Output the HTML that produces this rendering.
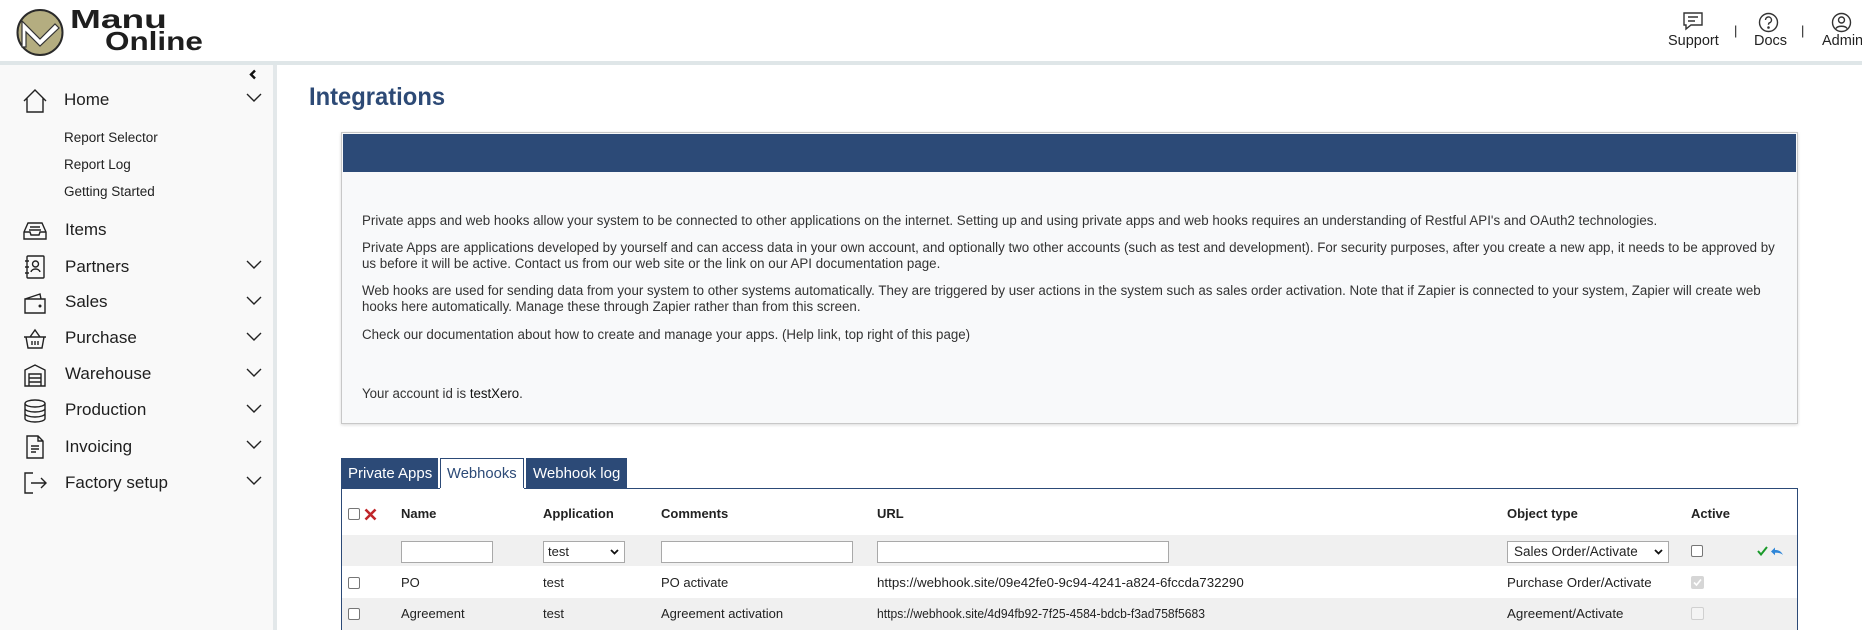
<!DOCTYPE html>
<html><head><meta charset="utf-8">
<style>
*{margin:0;padding:0;box-sizing:border-box}
body{width:1862px;height:630px;overflow:hidden;background:#fff;font-family:"Liberation Sans",Arial,sans-serif;color:#222;position:relative}
.a{position:absolute;white-space:nowrap}
.fit{position:absolute;white-space:nowrap;transform-origin:0 50%}
.side{position:absolute;left:0;top:65px;width:273px;height:565px;background:#f9f9f9}
.nav{font-size:17px;color:#1e1e1e;line-height:20px}
.sub{font-size:13.5px;color:#222;line-height:16px}
.chev{position:absolute;left:246px;width:16px;height:9px}
.ic{position:absolute;left:22px;width:26px;height:26px}
.p{font-size:13.5px;color:#333;line-height:16px}
.th{font-size:13px;font-weight:bold;color:#222;line-height:16px}
.td{font-size:13px;color:#222;line-height:16px}
.inp{position:absolute;background:#fff;border:1px solid #a9a9a9;height:22px;top:541px}
.cb{position:absolute;width:12px;height:12px;border:1px solid #767676;border-radius:2px;background:#fff}
</style></head><body>
<div class="a" style="left:0;top:0;width:1862px;height:62px;background:#fff"></div>
<div class="a" style="left:0;top:61px;width:1862px;height:4px;background:#dfe6e8"></div>
<svg class="a" style="left:15px;top:8px" width="50" height="50" viewBox="0 0 50 50">
<circle cx="25" cy="24.5" r="22.5" fill="#b4ad80" stroke="#2a2a2a" stroke-width="2"/>
<path d="M7 39 L7 13 L25 31 L40 16 L44 20 L25 38 L11 24 L11 39 Z" fill="#fff" stroke="#333" stroke-width="1.2"/>
</svg>
<div class="fit" style="left:70px;top:5px;font-size:26px;font-weight:bold;color:#1e1e1e;line-height:28px" id="lg1">Manu</div>
<div class="fit" style="left:105px;top:27px;font-size:26px;font-weight:bold;color:#1e1e1e;line-height:28px" id="lg2">Online</div>

<svg class="a" style="left:1682px;top:11px" width="22" height="20" viewBox="0 0 22 20" fill="none" stroke="#333" stroke-width="1.4"><path d="M2 2h18v12H9l-5 4v-4H2z"/><path d="M6 6h10M6 10h7"/></svg>
<div class="a" style="left:1668px;top:33px;font-size:14.5px">Support</div>
<div class="a" style="left:1734px;top:23px;font-size:13px">|</div>
<svg class="a" style="left:1758px;top:12px" width="21" height="21" viewBox="0 0 21 21" fill="none" stroke="#333" stroke-width="1.4"><circle cx="10.5" cy="10.5" r="9"/><path d="M7.5 8a3 3 0 1 1 4 2.8c-.8.4-1 1-1 2"/><circle cx="10.5" cy="15.5" r=".6" fill="#333"/></svg>
<div class="a" style="left:1754px;top:33px;font-size:14.5px">Docs</div>
<div class="a" style="left:1801px;top:23px;font-size:13px">|</div>
<svg class="a" style="left:1831px;top:12px" width="21" height="21" viewBox="0 0 21 21" fill="none" stroke="#333" stroke-width="1.4"><circle cx="10.5" cy="10.5" r="9"/><circle cx="10.5" cy="8" r="3"/><path d="M5 16.5c1.5-3 9.5-3 11 0"/></svg>
<div class="a" style="left:1822px;top:33px;font-size:14.5px">Admin</div>

<div class="side"></div>
<div class="a" style="left:273px;top:65px;width:4px;height:565px;background:#e3e8ea"></div>
<svg class="a" style="left:249px;top:69px" width="8" height="11" viewBox="0 0 8 11"><path d="M6 1.5L2 5.5l4 4" fill="none" stroke="#111" stroke-width="2.4"/></svg>

<svg class="ic" style="top:88px" viewBox="0 0 26 26" fill="none" stroke="#222" stroke-width="1.4"><path d="M2 13L13 2l11 11M5 10v14h16V10"/></svg>
<div class="a nav" style="left:64px;top:90px">Home</div>
<div class="a sub" style="left:64px;top:130px">Report Selector</div>
<div class="a sub" style="left:64px;top:157px">Report Log</div>
<div class="a sub" style="left:64px;top:184px">Getting Started</div>

<svg class="ic" style="top:218px" viewBox="0 0 26 26" fill="none" stroke="#222" stroke-width="1.4"><path d="M2 14l4-9h14l4 9v7H2zM2 14h6l1 3h8l1-3h6M8 9h10M7 12h12"/></svg>
<div class="a nav" style="left:65px;top:220px">Items</div>
<svg class="ic" style="top:254px" viewBox="0 0 26 26" fill="none" stroke="#222" stroke-width="1.4"><rect x="5" y="2" width="17" height="22" rx="1"/><circle cx="13.5" cy="10" r="3"/><path d="M9 18c1-4 8-4 9 0M3 7h4M3 13h4M3 19h4"/></svg>
<div class="a nav" style="left:65px;top:257px">Partners</div>
<svg class="ic" style="top:290px" viewBox="0 0 26 26" fill="none" stroke="#222" stroke-width="1.4"><path d="M3 9h20v14H3zM3 9l15-5 1 5"/><circle cx="18" cy="16" r=".8" fill="#222"/></svg>
<div class="a nav" style="left:65px;top:292px">Sales</div>
<svg class="ic" style="top:326px" viewBox="0 0 26 26" fill="none" stroke="#222" stroke-width="1.4"><path d="M2 11h22M4 11l2 11h14l2-11M8 11l5-7 5 7M10 15v4M13 15v4M16 15v4"/></svg>
<div class="a nav" style="left:65px;top:328px">Purchase</div>
<svg class="ic" style="top:362px" viewBox="0 0 26 26" fill="none" stroke="#222" stroke-width="1.4"><path d="M3 24V8l10-5 10 5v16zM7 12h12v12H7zM7 16h12M7 20h12"/></svg>
<div class="a nav" style="left:65px;top:364px">Warehouse</div>
<svg class="ic" style="top:398px" viewBox="0 0 26 26" fill="none" stroke="#222" stroke-width="1.4"><ellipse cx="13" cy="5.5" rx="10" ry="3.5"/><path d="M3 5.5v15c0 2 4.5 3.5 10 3.5s10-1.5 10-3.5v-15M3 10.5c0 2 4.5 3.5 10 3.5s10-1.5 10-3.5M3 15.5c0 2 4.5 3.5 10 3.5s10-1.5 10-3.5"/></svg>
<div class="a nav" style="left:65px;top:400px">Production</div>
<svg class="ic" style="top:434px" viewBox="0 0 26 26" fill="none" stroke="#222" stroke-width="1.4"><path d="M5 2h11l5 5v17H5zM16 2v5h5M9 12h8M9 15h8M9 18h5"/></svg>
<div class="a nav" style="left:65px;top:437px">Invoicing</div>
<svg class="ic" style="top:470px" viewBox="0 0 26 26" fill="none" stroke="#222" stroke-width="1.4"><path d="M11 3H3v20h8M9 13h15M19 8l5 5-5 5"/></svg>
<div class="a nav" style="left:65px;top:473px">Factory setup</div>

<svg class="chev" style="top:93px" viewBox="0 0 16 9"><path d="M1 1l7 7 7-7" fill="none" stroke="#222" stroke-width="1.4"/></svg>
<svg class="chev" style="top:260px" viewBox="0 0 16 9"><path d="M1 1l7 7 7-7" fill="none" stroke="#222" stroke-width="1.4"/></svg>
<svg class="chev" style="top:296px" viewBox="0 0 16 9"><path d="M1 1l7 7 7-7" fill="none" stroke="#222" stroke-width="1.4"/></svg>
<svg class="chev" style="top:332px" viewBox="0 0 16 9"><path d="M1 1l7 7 7-7" fill="none" stroke="#222" stroke-width="1.4"/></svg>
<svg class="chev" style="top:368px" viewBox="0 0 16 9"><path d="M1 1l7 7 7-7" fill="none" stroke="#222" stroke-width="1.4"/></svg>
<svg class="chev" style="top:404px" viewBox="0 0 16 9"><path d="M1 1l7 7 7-7" fill="none" stroke="#222" stroke-width="1.4"/></svg>
<svg class="chev" style="top:440px" viewBox="0 0 16 9"><path d="M1 1l7 7 7-7" fill="none" stroke="#222" stroke-width="1.4"/></svg>
<svg class="chev" style="top:476px" viewBox="0 0 16 9"><path d="M1 1l7 7 7-7" fill="none" stroke="#222" stroke-width="1.4"/></svg>

<div class="fit" style="left:309px;top:83px;font-size:25px;font-weight:bold;color:#2d4a76;line-height:28px" id="t0">Integrations</div>

<div class="a" style="left:341px;top:132px;width:1457px;height:292px;background:#f8f9fa;border:1px solid #c8c8c8;box-shadow:0 1px 3px rgba(0,0,0,.15)"></div>
<div class="a" style="left:343px;top:134px;width:1453px;height:38px;background:#2c4a77"></div>

<div class="fit p" style="left:362px;top:213px" id="p1">Private apps and web hooks allow your system to be connected to other applications on the internet. Setting up and using private apps and web hooks requires an understanding of Restful API's and OAuth2 technologies.</div>
<div class="fit p" style="left:362px;top:240px" id="p2">Private Apps are applications developed by yourself and can access data in your own account, and optionally two other accounts (such as test and development). For security purposes, after you create a new app, it needs to be approved by</div>
<div class="fit p" style="left:362px;top:256px" id="p3">us before it will be active. Contact us from our web site or the link on our API documentation page.</div>
<div class="fit p" style="left:362px;top:283px" id="p4">Web hooks are used for sending data from your system to other systems automatically. They are triggered by user actions in the system such as sales order activation. Note that if Zapier is connected to your system, Zapier will create web</div>
<div class="fit p" style="left:362px;top:299px" id="p5">hooks here automatically. Manage these through Zapier rather than from this screen.</div>
<div class="fit p" style="left:362px;top:327px" id="p6">Check our documentation about how to create and manage your apps. (Help link, top right of this page)</div>
<div class="fit p" style="left:362px;top:386px" id="p7">Your account id is <span style="color:#111">testXero</span>.</div>

<div class="a" style="left:341px;top:458px;width:97px;height:31px;background:#2c4a77"></div>
<div class="a" style="left:440px;top:458px;width:84px;height:31px;background:#fff;border:1px solid #2c4a77;border-bottom:none"></div>
<div class="a" style="left:526px;top:458px;width:101px;height:31px;background:#2c4a77"></div>
<div class="fit" style="left:348px;top:465px;font-size:15px;color:#fff;line-height:17px" id="tb1">Private Apps</div>
<div class="fit" style="left:447px;top:465px;font-size:15px;color:#2c4a77;line-height:17px" id="tb2">Webhooks</div>
<div class="fit" style="left:533px;top:465px;font-size:15px;color:#fff;line-height:17px" id="tb3">Webhook log</div>

<div class="a" style="left:341px;top:488px;width:1457px;height:142px;border:1px solid #2c4a77;border-bottom:none;background:#fff"></div>
<div class="a" style="left:440px;top:488px;width:84px;height:1px;background:#fff"></div>
<div class="a" style="left:342px;top:535px;width:1455px;height:31px;background:#f0f0f0"></div>
<div class="a" style="left:342px;top:598px;width:1455px;height:32px;background:#f0f0f0"></div>

<div class="cb" style="left:348px;top:508px"></div>
<svg class="a" style="left:364px;top:508px" width="13" height="13" viewBox="0 0 13 13"><path d="M1.5 1.5l10 10M11.5 1.5l-10 10" stroke="#c0262a" stroke-width="2.6"/></svg>
<div class="fit th" style="left:401px;top:506px">Name</div>
<div class="fit th" style="left:543px;top:506px">Application</div>
<div class="fit th" style="left:661px;top:506px">Comments</div>
<div class="fit th" style="left:877px;top:506px">URL</div>
<div class="fit th" style="left:1507px;top:506px">Object type</div>
<div class="fit th" style="left:1691px;top:506px">Active</div>

<div class="inp" style="left:401px;width:92px"></div>
<div class="inp" style="left:543px;width:82px"></div>
<div class="a td" style="left:548px;top:544px">test</div>
<svg class="a" style="left:610px;top:549px" width="9" height="6" viewBox="0 0 9 6"><path d="M1 1l3.5 3.5L8 1" fill="none" stroke="#111" stroke-width="1.8"/></svg>
<div class="inp" style="left:661px;width:192px"></div>
<div class="inp" style="left:877px;width:292px"></div>
<div class="inp" style="left:1507px;width:162px"></div>
<div class="a" style="left:1514px;top:544px;font-size:13.5px;line-height:16px">Sales Order/Activate</div>
<svg class="a" style="left:1654px;top:549px" width="9" height="6" viewBox="0 0 9 6"><path d="M1 1l3.5 3.5L8 1" fill="none" stroke="#111" stroke-width="1.8"/></svg>
<div class="cb" style="left:1691px;top:545px"></div>
<svg class="a" style="left:1757px;top:546px" width="27" height="10" viewBox="0 0 27 10"><path d="M1 5l3 3.5L10 1" fill="none" stroke="#1a9a2a" stroke-width="2"/><path d="M14 5.5l4-4v2.5c4 0 6.5 1.5 8 5-2-2-4.5-2.2-8-2.2v2.5z" fill="#2f86d8"/></svg>

<div class="cb" style="left:348px;top:577px"></div>
<div class="a td" style="left:401px;top:575px">PO</div>
<div class="a td" style="left:543px;top:575px">test</div>
<div class="fit td" style="left:661px;top:575px">PO activate</div>
<div class="fit td" style="left:877px;top:575px" id="u1">https://webhook.site/09e42fe0-9c94-4241-a824-6fccda732290</div>
<div class="fit td" style="left:1507px;top:575px" id="o1">Purchase Order/Activate</div>
<div class="a" style="left:1691px;top:576px;width:13px;height:13px;border-radius:2px;background:#d6d6d6"></div>
<svg class="a" style="left:1693px;top:578px" width="9" height="9" viewBox="0 0 9 9"><path d="M1 4.5l2.5 2.5L8 1.5" fill="none" stroke="#fff" stroke-width="1.6"/></svg>

<div class="cb" style="left:348px;top:608px"></div>
<div class="fit td" style="left:401px;top:606px">Agreement</div>
<div class="a td" style="left:543px;top:606px">test</div>
<div class="fit td" style="left:661px;top:606px">Agreement activation</div>
<div class="fit td" style="left:877px;top:606px" id="u2">https://webhook.site/4d94fb92-7f25-4584-bdcb-f3ad758f5683</div>
<div class="fit td" style="left:1507px;top:606px" id="o2">Agreement/Activate</div>
<div class="a" style="left:1691px;top:607px;width:13px;height:13px;border-radius:2px;border:1px solid #d0d0d0;background:#f4f4f4"></div>

<script>
var W={lg1:97,lg2:98,t0:136,p1:1295,p2:1413,p3:578,p4:1399,p5:499,p6:608,p7:161,tb1:84,tb2:70,tb3:87,u1:367,u2:328,o1:145,o2:116};
for(var k in W){var e=document.getElementById(k);if(!e)continue;var w=e.scrollWidth||e.getBoundingClientRect().width;if(w>0)e.style.transform='scaleX('+(W[k]/w)+')';}
</script>
</body></html>
